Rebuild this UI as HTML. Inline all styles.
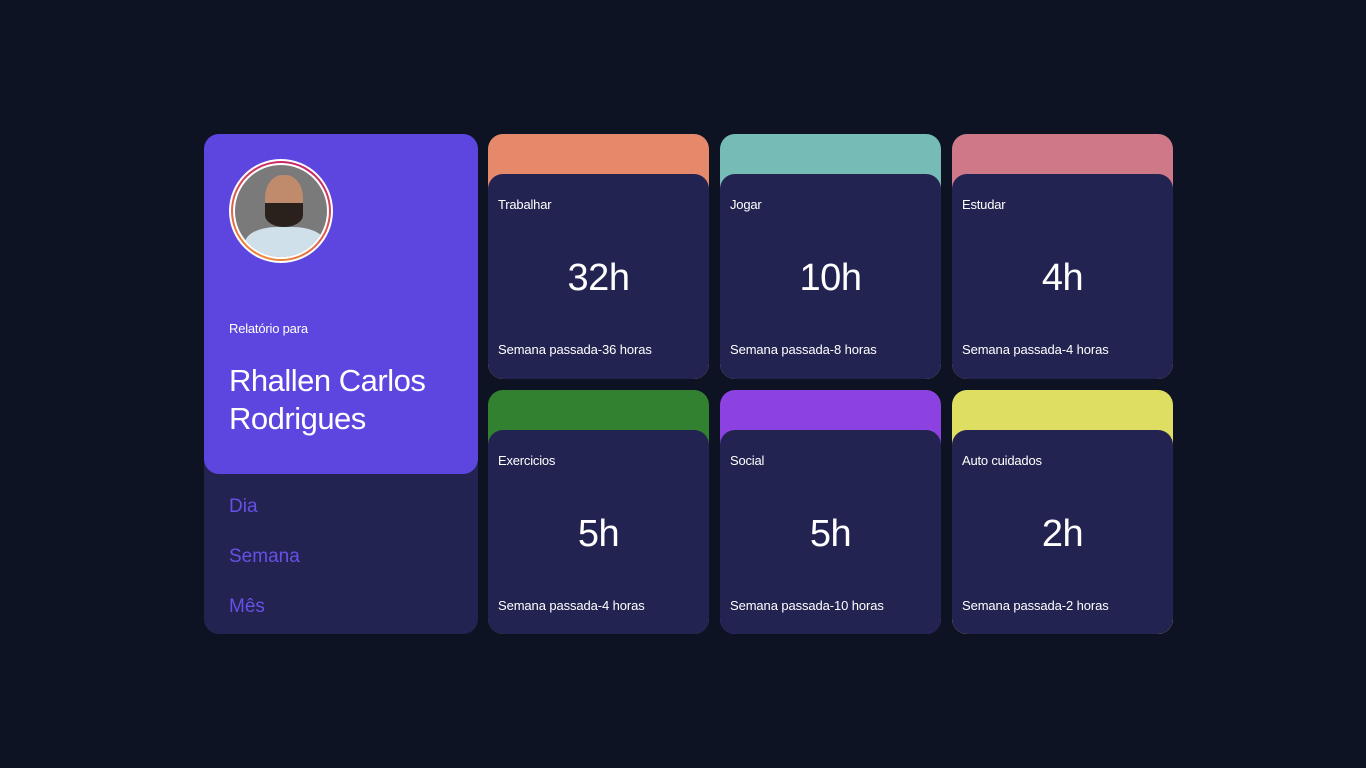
<!DOCTYPE html>
<html><head><meta charset="utf-8"><style>
*{margin:0;padding:0;box-sizing:border-box}
body{width:1366px;height:768px;background:#0d1323;font-family:"Liberation Sans",sans-serif;color:#fff;position:relative;overflow:hidden}
.prof{position:absolute;left:204px;top:134px;width:274px;height:500px;background:#232352;border-radius:15px}
.top{position:absolute;left:0;top:0;width:274px;height:340px;background:#5d45e0;border-radius:15px}
.av{position:absolute;left:25px;top:25px;width:104px;height:104px;border-radius:50%;background:#fff;padding:2px}
.ring{width:100%;height:100%;border-radius:50%;background:linear-gradient(200deg,#c0166e,#f09433);padding:2px}
.ring2{width:100%;height:100%;border-radius:50%;background:#fff;padding:2px}
.photo{width:100%;height:100%;border-radius:50%;background:#7a7a7a;position:relative;overflow:hidden}
.head{position:absolute;left:30px;top:10px;width:38px;height:50px;border-radius:45%;background:#c08a6c}
.beard{position:absolute;left:30px;top:38px;width:38px;height:24px;border-radius:0 0 50% 50%;background:#2a211d}
.shirt{position:absolute;left:10px;top:62px;width:80px;height:40px;border-radius:40% 40% 0 0;background:#cfe0ea}
.rel{position:absolute;left:25px;top:187px;font-size:13px;letter-spacing:-0.2px}
.name{position:absolute;left:25px;top:228px;font-size:31px;line-height:38px;letter-spacing:-0.5px}
.nav{position:absolute;left:25px;font-size:19px;color:#6650e6}
.card{position:absolute;width:221px;height:245px;border-radius:15px;overflow:hidden}
.in{position:absolute;left:0;top:40px;width:221px;bottom:0;background:#232352;border-radius:15px}
.t{position:absolute;left:10px;top:23px;font-size:13px;letter-spacing:-0.2px}
.h{position:absolute;left:0;right:0;top:83px;text-align:center;font-size:38px;letter-spacing:-0.5px}
.l{position:absolute;left:10px;top:168px;font-size:13px;letter-spacing:-0.1px}
</style></head><body>
<div class="prof"><div class="top">
<div class="av"><div class="ring"><div class="ring2"><div class="photo"><div class="shirt"></div><div class="head"></div><div class="beard"></div></div></div></div></div>
<div class="rel">Relatório para</div>
<div class="name">Rhallen Carlos<br>Rodrigues</div></div>
<div class="nav" style="top:362px">Dia</div>
<div class="nav" style="top:412px">Semana</div>
<div class="nav" style="top:462px">Mês</div>
</div>
<div class="card" style="left:488px;top:134px;background:#e6896b"><div class="in"><div class="t">Trabalhar</div><div class="h">32h</div><div class="l">Semana passada-36 horas</div></div></div>
<div class="card" style="left:720px;top:134px;background:#77bbb6"><div class="in"><div class="t">Jogar</div><div class="h">10h</div><div class="l">Semana passada-8 horas</div></div></div>
<div class="card" style="left:952px;top:134px;background:#cf7888"><div class="in"><div class="t">Estudar</div><div class="h">4h</div><div class="l">Semana passada-4 horas</div></div></div>
<div class="card" style="left:488px;top:390px;height:244px;background:#318131"><div class="in"><div class="t">Exercicios</div><div class="h">5h</div><div class="l">Semana passada-4 horas</div></div></div>
<div class="card" style="left:720px;top:390px;height:244px;background:#8c42e0"><div class="in"><div class="t">Social</div><div class="h">5h</div><div class="l">Semana passada-10 horas</div></div></div>
<div class="card" style="left:952px;top:390px;height:244px;background:#dede62"><div class="in"><div class="t">Auto cuidados</div><div class="h">2h</div><div class="l">Semana passada-2 horas</div></div></div>
</body></html>
